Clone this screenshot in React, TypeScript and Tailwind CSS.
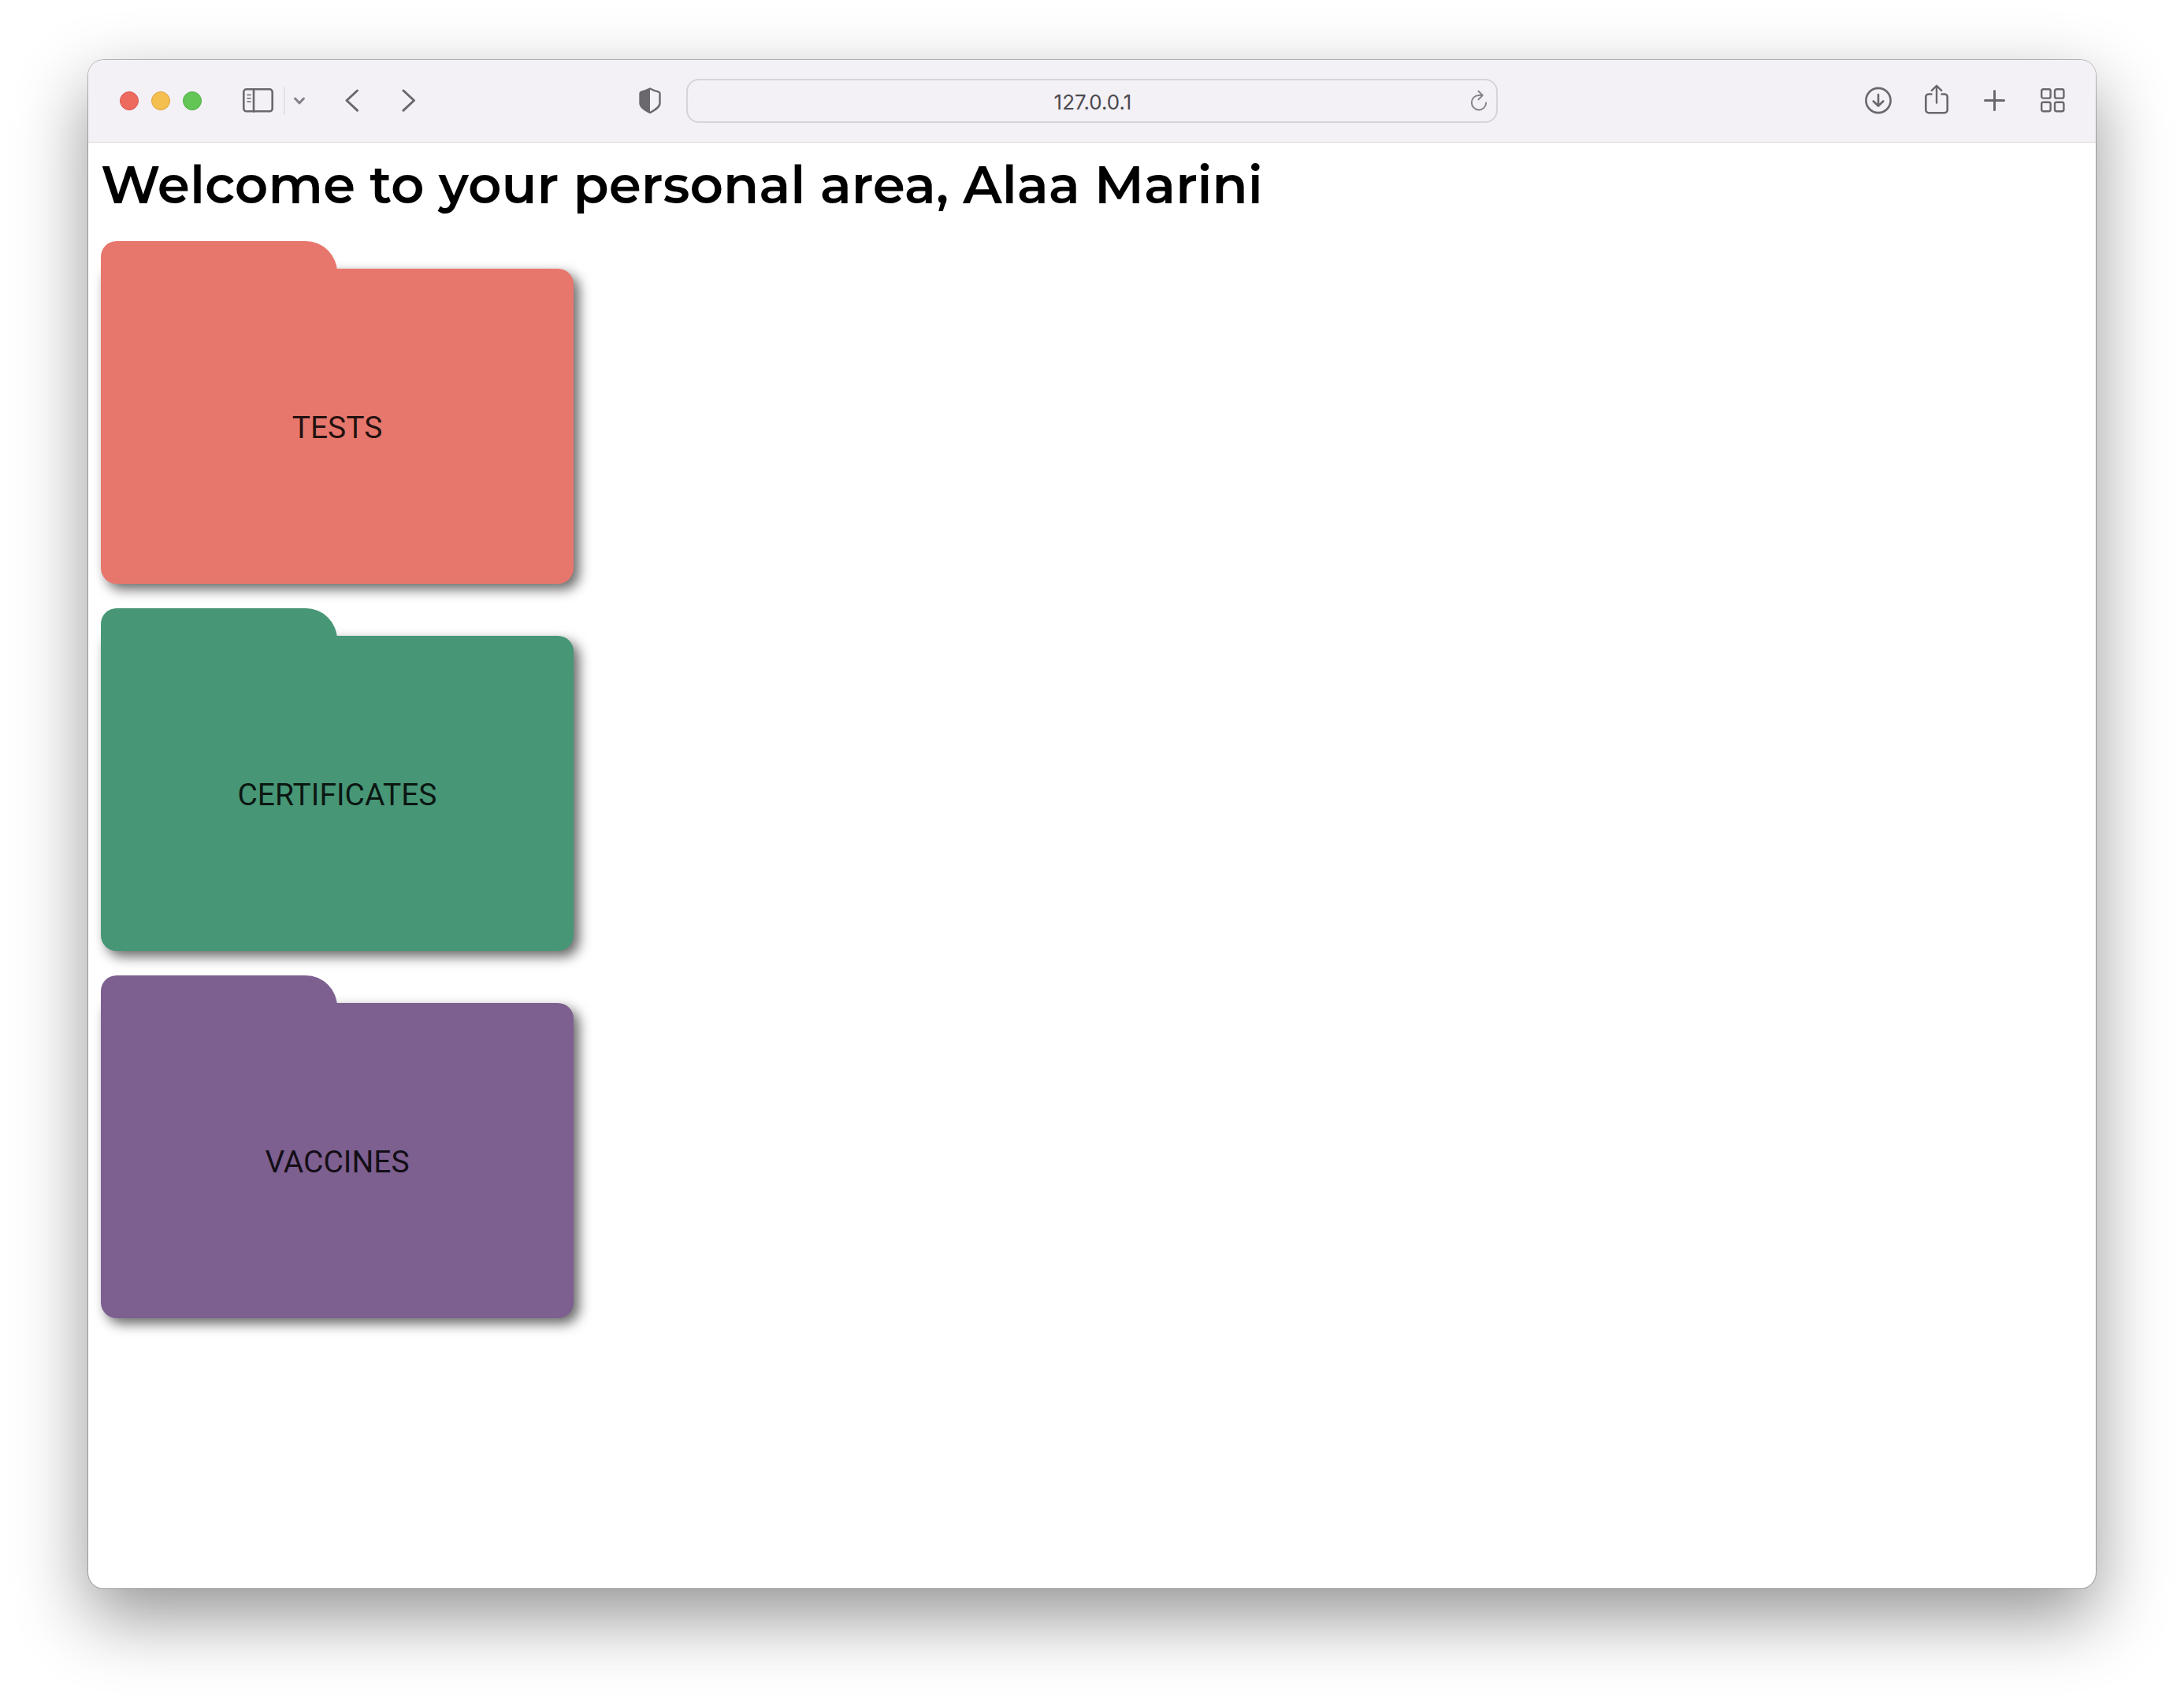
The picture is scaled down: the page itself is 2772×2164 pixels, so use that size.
import React from "react";

const folders = [
  { label: "TESTS", color: "bg-[#e7776c]" },
  { label: "CERTIFICATES", color: "bg-[#479676]" },
  { label: "VACCINES", color: "bg-[#7d5f90]" },
];

function Folder({ label, color }: { label: string; color: string }) {
  return (
    <a
      href={`#${label.toLowerCase()}`}
      className="flex w-[600px] flex-col font-['Roboto',sans-serif] text-[39px] leading-none text-black/85"
    >
      <span className={`z-10 -mb-5 h-[55px] w-1/2 rounded-tl-[20px] rounded-tr-[40px] [clip-path:inset(0_0_20px_0)] ${color}`} />
      <span
        className={`flex h-[400px] items-center justify-center rounded-tr-[20px] rounded-b-[20px] pt-1 shadow-[7px_7px_16px_rgba(0,0,0,0.6)] ${color}`}
      >
        {label}
      </span>
    </a>
  );
}

const stroke = {
  fill: "none",
  stroke: "currentColor",
  strokeLinecap: "round" as const,
  strokeLinejoin: "round" as const,
};

function Toolbar() {
  return (
    <header className="grid h-[105px] grid-cols-[1fr_auto_1fr] items-center border-b border-[#d9d8da] bg-[#f3f0f6] text-[#6a676d]">
      <div className="flex items-center pl-10">
        <div className="flex gap-4">
          <button aria-label="Close" className="size-6 rounded-full border border-[#d9564b] bg-[#ed6a5e]" />
          <button aria-label="Minimize" className="size-6 rounded-full border border-[#dba23c] bg-[#f5bf4f]" />
          <button aria-label="Zoom" className="size-6 rounded-full border border-[#51ae43] bg-[#62c655]" />
        </div>
        <button aria-label="Sidebar" className="ml-[52px]">
          <svg width="40" height="32" viewBox="0 0 40 32" {...stroke} strokeWidth="2.6">
            <rect x="1.3" y="1.3" width="36.4" height="28" rx="3.5" />
            <path d="M14 1.5v28" />
            <path d="M6 8.5h4M6 12.8h4M6 17h4" strokeWidth="1.6" />
          </svg>
        </button>
        <span className="ml-3 h-9 w-0.5 bg-[#e4e1e7]" />
        <button aria-label="Tab groups" className="ml-2.5 text-[#84818a]">
          <svg width="16" height="12" viewBox="0 0 16 12" {...stroke} strokeWidth="3">
            <path d="M2.5 3l5.5 5.8L13.5 3" />
          </svg>
        </button>
        <button aria-label="Back" className="ml-[50px]">
          <svg width="18" height="30" viewBox="0 0 18 30" {...stroke} strokeWidth="3">
            <path d="M15.5 2L2 14.5l13.5 12.7" />
          </svg>
        </button>
        <button aria-label="Forward" className="ml-[54px]">
          <svg width="18" height="30" viewBox="0 0 18 30" {...stroke} strokeWidth="3">
            <path d="M2 2l13.5 12.5L2 27.2" />
          </svg>
        </button>
        <button aria-label="Privacy report" className="mr-8 ml-auto">
          <svg width="28" height="34" viewBox="0 0 28 34" {...stroke} strokeWidth="2.4">
            <path d="M14 1.5c3.500 1.800 7 3 11 4.200 1 .3 1.500 1 1.500 2V20c0 5-6 8.500-12.500 12C7.500 28.500 1.500 25 1.500 20V7.700c0-1 .5-1.700 1.500-2C7 4.500 10.500 3.300 14 1.500z" />
            <path d="M14 1.500V32C7.500 28.500 1.500 25 1.500 20V7.700c0-1 .5-1.700 1.500-2C7 4.500 10.500 3.300 14 1.500z" fill="currentColor" stroke="none" />
          </svg>
        </button>
      </div>

      <div className="flex h-14 w-[1030px] items-center rounded-2xl border-2 border-[#d6d3d9] pr-2.5 pl-3">
        <input
          aria-label="Address"
          defaultValue="127.0.0.1"
          className="ml-6 min-w-0 flex-1 bg-transparent pt-1 text-center text-[26px] leading-8 text-[#4c4a4e] outline-none"
        />
        <button aria-label="Reload" className="text-[#858288]">
          <svg width="24" height="28" viewBox="0 0 24 28" {...stroke} strokeWidth="2">
            <path d="M21.2 16.5A9.2 9.2 0 1 1 12 7h4" />
            <path d="M11.500 1.800l5.300 5.200-5.300 5.200" />
          </svg>
        </button>
      </div>

      <div className="flex items-center justify-end pr-[38px]">
        <button aria-label="Downloads">
          <svg width="36" height="36" viewBox="0 0 36 36" {...stroke} strokeWidth="2.6">
            <circle cx="18" cy="17.5" r="15.6" />
            <path d="M18 10v14M11.800 18.500l6.200 6 6.200-6" />
          </svg>
        </button>
        <button aria-label="Share" className="ml-10">
          <svg width="32" height="44" viewBox="0 0 32 44" {...stroke} strokeWidth="2.6">
            <path d="M10.500 13.500H6A3.700 3.700 0 0 0 2.300 17v16.500A3.700 3.700 0 0 0 6 37.200h20a3.700 3.700 0 0 0 3.700-3.700V17a3.700 3.700 0 0 0-3.700-3.500h-4.500" strokeLinecap="butt" />
            <path d="M16 24.500V3.500M9.800 8.800L16 2.800l6.200 6" strokeWidth="2.4" />
          </svg>
        </button>
        <button aria-label="New tab" className="ml-11">
          <svg width="28" height="28" viewBox="0 0 28 28" {...stroke} strokeWidth="3">
            <path d="M13.5 1.500v24M1.500 13.500h24" />
          </svg>
        </button>
        <button aria-label="Tab overview" className="ml-11">
          <svg width="32" height="32" viewBox="0 0 32 32" {...stroke} strokeWidth="2.4">
            <rect x="1.2" y="1.2" width="11.4" height="11.4" rx="2.2" />
            <rect x="18" y="1.2" width="11.4" height="11.4" rx="2.2" />
            <rect x="1.2" y="17.8" width="11.4" height="11.4" rx="2.2" />
            <rect x="18" y="17.8" width="11.4" height="11.4" rx="2.2" />
          </svg>
        </button>
      </div>
    </header>
  );
}

export default function App() {
  return (
    <div className="flex min-h-screen flex-col overflow-hidden bg-white px-28 pt-[76px] pb-[148px] font-['Inter',sans-serif]">
      <div className="flex flex-1 flex-col overflow-hidden rounded-[20px] bg-white shadow-[0_0_0_1px_rgba(0,0,0,0.25),0_36px_90px_rgba(0,0,0,0.42)]">
        <Toolbar />
        <main className="flex flex-col px-4 pt-4">
          <h1 className="font-['Montserrat','DejaVu_Sans',sans-serif] text-[66px] leading-[76px] font-semibold text-black">
            Welcome to your personal area, Alaa Marini
          </h1>
          <nav aria-label="Folders" className="mt-[33px] flex flex-col gap-[31px]">
            {folders.map((f) => (
              <Folder key={f.label} {...f} />
            ))}
          </nav>
        </main>
      </div>
    </div>
  );
}
